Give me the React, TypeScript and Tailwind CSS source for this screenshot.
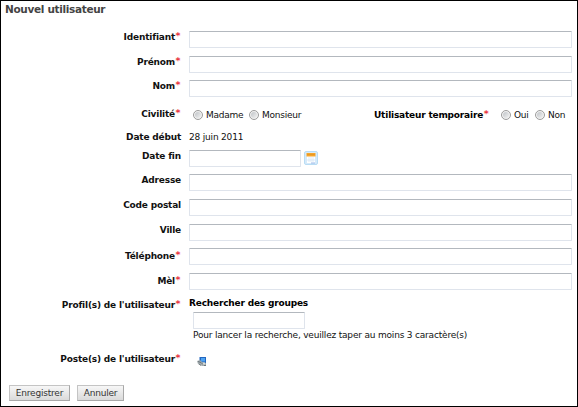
import type { ReactNode } from 'react';

function Row({ label, required, height, labelTop = '', children }: {
  label: string; required?: boolean; height: string; labelTop?: string; children: ReactNode;
}) {
  return (
    <div className={`flex shrink-0 items-start ${height}`}>
      <div className={`flex w-[180px] shrink-0 justify-end whitespace-nowrap font-bold leading-[12px] tracking-[-0.19px] ${labelTop}`}>
        <span>{label}</span>
        {required && <Star />}
      </div>
      <div className="ml-2 flex w-[383px] shrink-0 items-start">{children}</div>
    </div>
  );
}

function Star() {
  return <span className="-mt-px w-[6px] text-center text-[9.5px] font-bold text-[#e8323a]">*</span>;
}

function Field({ size = 'h-[17px] w-[383px]' }: { size?: string }) {
  return <input className={`block shrink-0 rounded-[1px] border border-[#dfe4ec] border-t-[#b3b8be] bg-white px-1 outline-none ${size}`} />;
}

function Radio({ label, width }: { label: string; width: string }) {
  return (
    <label className={`flex items-center whitespace-nowrap ${width}`}>
      <span className="mr-[3px] flex size-[10px] shrink-0 items-center justify-center rounded-full border border-[#9c9c9c] bg-[#f1f1f1]">
        <span className="size-[6px] rounded-full bg-gradient-to-br from-[#bfc3c7] to-[#f2f2f2]" />
      </span>
      {label}
    </label>
  );
}

function CalendarIcon() {
  return (
    <svg className="ml-[3px] mt-px size-[14px]" viewBox="0 0 14 14">
      <rect x=".5" y=".5" width="13" height="13" rx="1.5" fill="#d5eafa" stroke="#b9dcf4" />
      <path d="M3 5h8v7H3z" fill="#fff" />
      <path d="M2.5 2h9v3.5h-9z" fill="#f6a52a" />
      <path d="M3.5 3.5h8" stroke="#d98b22" strokeDasharray="1 1" />
      <path d="M5 6v5M7 6v5M9 6v5M3 9h8" stroke="#c9def0" strokeWidth=".6" />
      <path d="M7 12h4" stroke="#9cb8e8" />
    </svg>
  );
}

function PostIcon() {
  return (
    <svg className="ml-[8px] h-[10px] w-[10px]" viewBox="0 0 10 10">
      <path d="M2.5 0H9v6H2.5z" fill="#2367c0" />
      <path d="M4 1h4v3.5H4z" fill="#4ea3f1" />
      <path d="M0 4l3-1 2 2 4 1v3H6L5 9 1 7z" fill="#a4adaf" />
      <path d="M1 4.5l3 1 2 2M2 7l2 1.5M7 8.5h2" stroke="#5d6870" strokeWidth=".8" fill="none" />
      <path d="M6 5.5h2v2H6z" fill="#d7ddd9" />
    </svg>
  );
}

function Button({ children, width }: { children: string; width: string }) {
  return (
    <button className={`h-[16px] border border-[#c4c4c4] border-b-[#a9a9a9] border-r-[#a9a9a9] bg-gradient-to-b from-[#f7f7f7] to-[#dadada] text-center text-[9px] leading-[13px] tracking-[-0.2px] text-[#333] ${width}`}>
      {children}
    </button>
  );
}

export default function App() {
  return (
    <main className="flex h-[407px] w-[578px] flex-col overflow-hidden border border-black bg-white font-['DejaVu_Sans',Verdana,sans-serif] text-[9px] leading-[12px] tracking-[-0.19px] text-[#111]">
      <h1 className="h-[30px] shrink-0 pl-1 text-[10.5px] font-bold leading-[16px] tracking-[-0.33px] text-[#444]">Nouvel utilisateur</h1>
      <Row label="Identifiant" required height="h-[25px]"><Field /></Row>
      <Row label="Prénom" required height="h-[24px]"><Field /></Row>
      <Row label="Nom" required height="h-[28px]"><Field /></Row>
      <Row label="Civilité" required height="h-[23px]">
        <div className="flex h-[14px] w-full items-center pl-1 tracking-[-0.25px]">
          <Radio label="Madame" width="w-[56px]" />
          <Radio label="Monsieur" width="w-[122px]" />
          <span className="flex w-[130px] whitespace-nowrap pl-[3px] font-bold tracking-[-0.19px] text-black">Utilisateur temporaire<Star /></span>
          <Radio label="Oui" width="w-[34px]" />
          <Radio label="Non" width="w-[34px]" />
        </div>
      </Row>
      <Row label="Date début" height="h-[19px]"><span>28 juin 2011</span></Row>
      <Row label="Date fin" height="h-[24px]">
        <Field size="h-[17px] w-[112px]" />
        <CalendarIcon />
      </Row>
      <Row label="Adresse" height="h-[25px]"><Field /></Row>
      <Row label="Code postal" height="h-[25px]"><Field /></Row>
      <Row label="Ville" height="h-[24px]"><Field /></Row>
      <Row label="Téléphone" required height="h-[25px]" labelTop="pt-[2px]"><Field /></Row>
      <Row label="Mèl" required height="h-[24px]" labelTop="pt-[2px]"><Field /></Row>
      <Row label="Profil(s) de l'utilisateur" required height="h-[55px]" labelTop="pt-[2px]">
        <div className="flex flex-col whitespace-nowrap">
          <strong className="h-[15px] text-black">Rechercher des groupes</strong>
          <div className="pl-[4px]">
            <Field size="h-[17px] w-[112px]" />
            <p>Pour lancer la recherche, veuillez taper au moins 3 caractère(s)</p>
          </div>
        </div>
      </Row>
      <Row label="Poste(s) de l'utilisateur" required height="h-[33px]" labelTop="pt-px">
        <div className="pt-[5px]"><PostIcon /></div>
      </Row>
      <div className="flex gap-[7px] pl-2">
        <Button width="w-[61px]">Enregistrer</Button>
        <Button width="w-[47px]">Annuler</Button>
      </div>
    </main>
  );
}
